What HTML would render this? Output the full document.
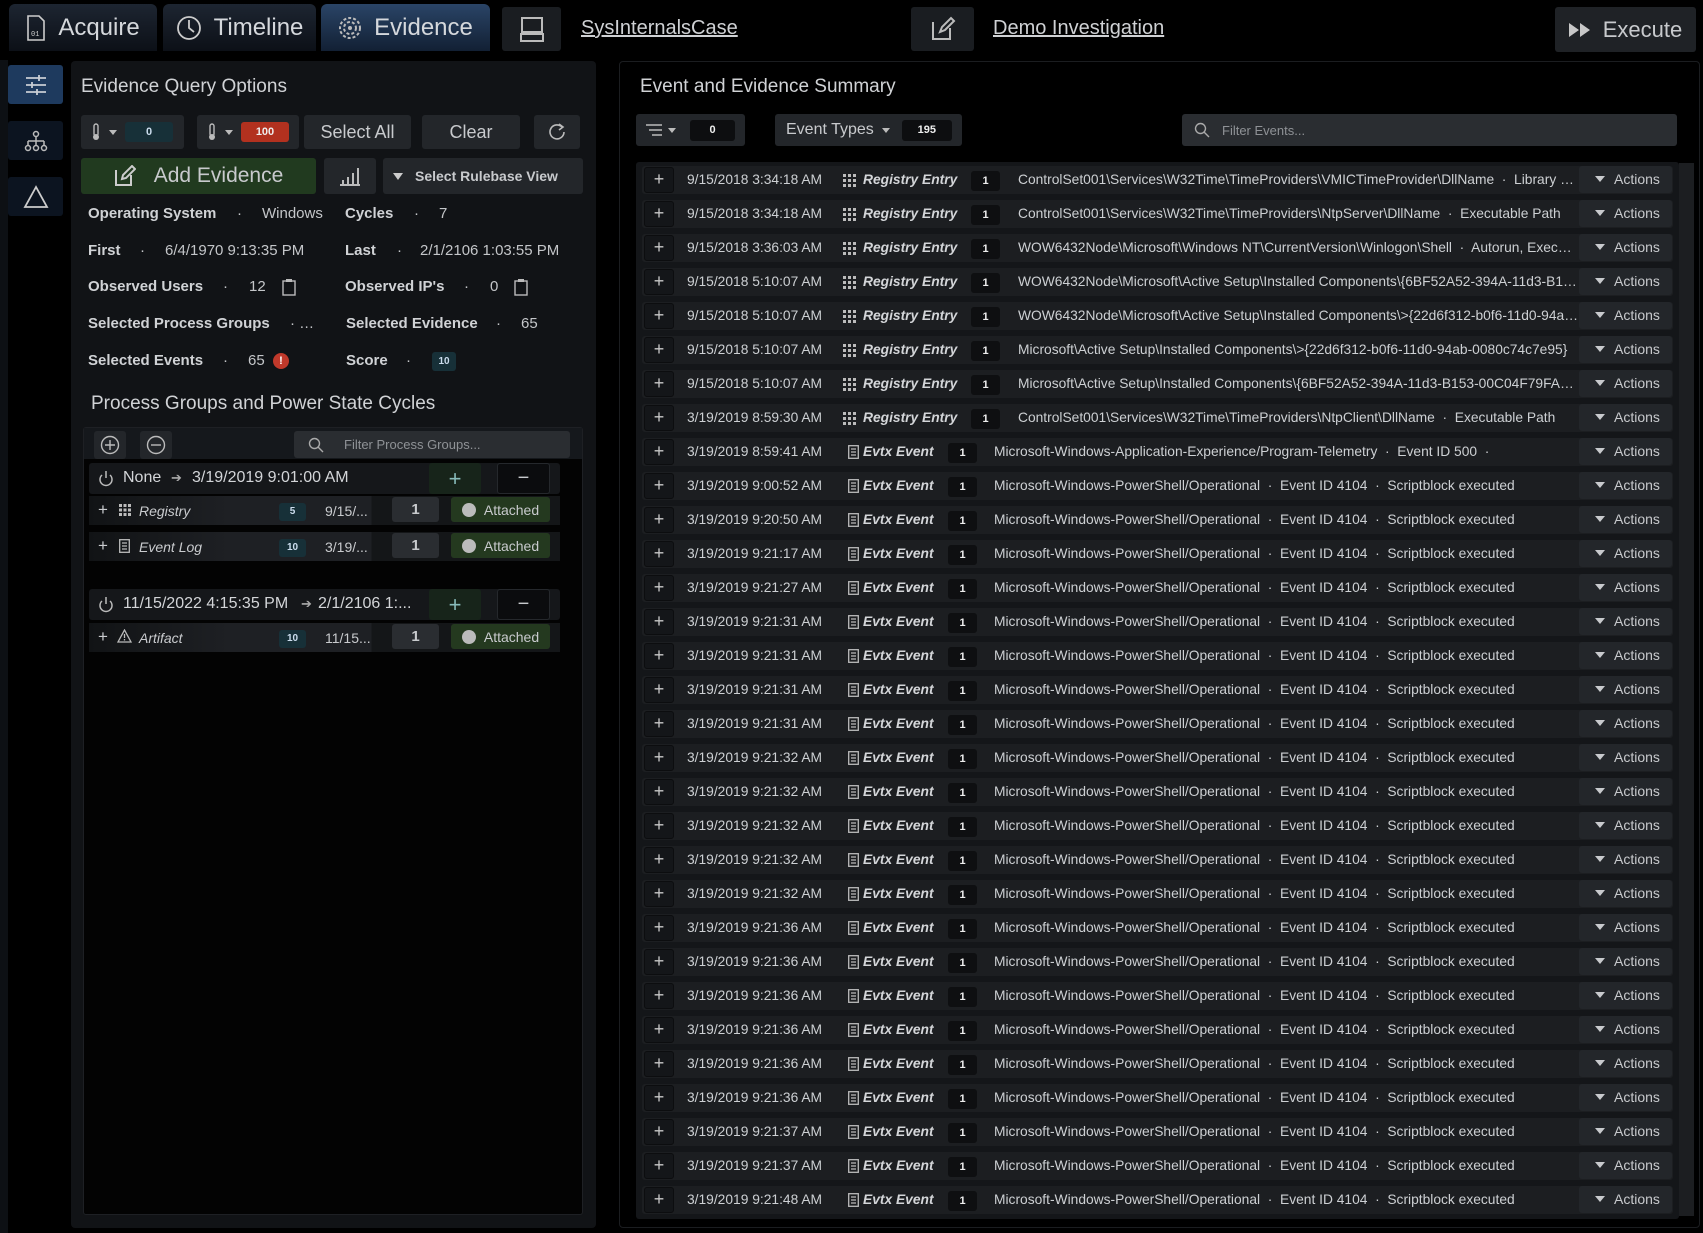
<!DOCTYPE html>
<html><head><meta charset="utf-8"><style>
*{box-sizing:border-box;margin:0;padding:0}
body{width:1703px;height:1233px;background:#000;overflow:hidden;position:relative;font-family:"Liberation Sans",sans-serif;color:#c9cbce}
.a{position:absolute}
.tab{position:absolute;top:4px;height:47px;background:linear-gradient(#1d2531,#0c1017);border-radius:6px 6px 0 0;color:#d5d8dc;font-size:24px;display:flex;align-items:center;gap:12px;justify-content:center}
.tab.on{background:linear-gradient(#2a4466,#122034)}
.btn{position:absolute;background:#23262a;border-radius:3px;color:#c8cacd;display:flex;align-items:center;justify-content:center}
.sb{position:absolute;left:8px;width:55px;height:39px;background:#0c1420;border-radius:3px;display:flex;align-items:center;justify-content:center}
.st{position:absolute;font-size:15px;color:#c4c6c9;white-space:nowrap}
.st b{color:#d0d2d5}
.row{position:absolute;left:642px;width:1031px;height:28px;background:#1c1e21;border-radius:3px;font-size:13.8px;white-space:nowrap}
.row>*{position:absolute}
.pl{left:2px;top:1px;width:30px;height:26px;background:#141619;border:1px solid #0c0d0f;border-radius:3px;color:#c8c8c8;font-size:18px;text-align:center;line-height:23px}
.dt{left:45px;top:6px;color:#cdd0d3}
.ty{top:6px;left:221px;font-weight:bold;font-style:italic;color:#d4d6d9}
.bd{top:5px;height:20px;width:29px;background:#0e0f11;border-radius:3px;color:#eee;font-size:11px;font-weight:bold;text-align:center;line-height:20px}
.tx{top:6px;width:560px;overflow:hidden;text-overflow:ellipsis;color:#cdd0d3}
.ac{left:937px;top:0;width:93px;height:27px;background:#23262a;border-radius:3px;color:#c8cacd;font-size:14px;line-height:27px;padding-left:16px}
.ac:before{content:"";display:inline-block;border-left:5px solid transparent;border-right:5px solid transparent;border-top:6px solid #c8cacd;margin-right:9px;vertical-align:2px}
.txt{position:absolute;white-space:nowrap}
</style></head><body>
<div class="tab" style="left:9px;width:148px"><svg width="20" height="26" viewBox="0 0 20 26"><path d="M2 1h11l5 5v19H2z" fill="none" stroke="#ccc" stroke-width="1.6"/><text x="5" y="21" font-size="7" fill="#ccc" font-family="Liberation Mono">01</text></svg>Acquire</div>
<div class="tab" style="left:163px;width:153px"><svg width="26" height="26"><circle cx="13" cy="13" r="11" fill="none" stroke="#ccc" stroke-width="1.8"/><path d="M13 5v8l5 4" fill="none" stroke="#ccc" stroke-width="1.8"/></svg>Timeline</div>
<div class="tab on" style="left:321px;width:169px"><svg width="24" height="24"><circle cx="12" cy="12" r="10" fill="none" stroke="#bbb" stroke-width="2" stroke-dasharray="3 2"/><circle cx="12" cy="12" r="6" fill="none" stroke="#bbb" stroke-width="2" stroke-dasharray="3 2"/><circle cx="12" cy="12" r="2" fill="#bbb"/></svg>Evidence</div>
<div class="btn" style="left:502px;top:7px;width:59px;height:44px;background:#1a1d21"><svg width="28" height="28"><rect x="4" y="3" width="20" height="14" fill="none" stroke="#bbb" stroke-width="2"/><rect x="3" y="19" width="22" height="7" fill="none" stroke="#bbb" stroke-width="2"/></svg></div>
<div class="txt" style="left:581px;top:17px;font-size:20px;text-decoration:underline;color:#cfd1d4">SysInternalsCase</div>
<div class="btn" style="left:911px;top:7px;width:63px;height:44px;background:#1a1d21"><svg width="26" height="26"><path d="M3 6v17h17V12" fill="none" stroke="#bbb" stroke-width="2"/><path d="M10 16l2-5 9-9 3 3-9 9z" fill="none" stroke="#bbb" stroke-width="2"/></svg></div>
<div class="txt" style="left:993px;top:17px;font-size:20px;text-decoration:underline;color:#cfd1d4">Demo Investigation</div>
<div class="btn" style="left:1555px;top:7px;width:141px;height:45px;background:#1f2226;font-size:22px;gap:12px"><svg width="22" height="14"><path d="M0 0l10 7-10 7zM11 0l10 7-10 7z" fill="#c8c8c8"/></svg>Execute</div>

<div class="a" style="left:0;top:60px;width:8px;height:1173px;background:#0d1014"></div>
<div class="sb" style="top:65px;background:#1e3a5e"><svg width="24" height="22"><path d="M2 4h20M2 11h20M2 18h20M15 1v6M8 8v6M13 15v6" stroke="#c8cdd4" stroke-width="1.8"/></svg></div>
<div class="sb" style="top:121px"><svg width="26" height="22"><circle cx="13" cy="4" r="2.5" fill="none" stroke="#bbb" stroke-width="1.5"/><path d="M13 7v4M5 11h16M5 11v4M13 11v4M21 11v4" stroke="#bbb" stroke-width="1.5" fill="none"/><circle cx="5" cy="18" r="2.5" fill="none" stroke="#bbb" stroke-width="1.5"/><circle cx="13" cy="18" r="2.5" fill="none" stroke="#bbb" stroke-width="1.5"/><circle cx="21" cy="18" r="2.5" fill="none" stroke="#bbb" stroke-width="1.5"/></svg></div>
<div class="sb" style="top:177px"><svg width="26" height="24"><path d="M13 2L2 22h22z" fill="none" stroke="#ccc" stroke-width="1.8"/></svg></div>

<div class="a" style="left:71px;top:61px;width:525px;height:1167px;background:#111316;border-radius:4px"></div>
<div class="txt" style="left:81px;top:76px;font-size:19px;color:#d0d2d5">Evidence Query Options</div>
<div class="btn" style="left:81px;top:115px;width:103px;height:34px;justify-content:flex-start;padding-left:10px;gap:8px"><svg width="10" height="18"><rect x="3" y="1" width="4" height="12" rx="2" fill="none" stroke="#bbb" stroke-width="1.4"/><circle cx="5" cy="14" r="3" fill="#bbb"/></svg><span style="border-left:4px solid transparent;border-right:4px solid transparent;border-top:5px solid #bbb"></span><span style="width:48px;height:20px;background:#173038;border-radius:3px;font-size:11px;font-weight:bold;text-align:center;line-height:20px;color:#cde">0</span></div>
<div class="btn" style="left:197px;top:115px;width:102px;height:34px;justify-content:flex-start;padding-left:10px;gap:8px"><svg width="10" height="18"><rect x="3" y="1" width="4" height="12" rx="2" fill="none" stroke="#bbb" stroke-width="1.4"/><circle cx="5" cy="14" r="3" fill="#bbb"/></svg><span style="border-left:4px solid transparent;border-right:4px solid transparent;border-top:5px solid #bbb"></span><span style="width:48px;height:20px;background:#b2311f;border-radius:3px;font-size:11px;font-weight:bold;text-align:center;line-height:20px;color:#eee">100</span></div>
<div class="btn" style="left:304px;top:115px;width:107px;height:34px;font-size:18px">Select All</div>
<div class="btn" style="left:422px;top:115px;width:98px;height:34px;font-size:18px">Clear</div>
<div class="btn" style="left:534px;top:115px;width:46px;height:34px"><svg width="18" height="18"><path d="M14 4A7 7 0 1 0 16 9" fill="none" stroke="#bbb" stroke-width="1.6"/><path d="M11 1l4 3-4 3" fill="none" stroke="#bbb" stroke-width="1.6"/></svg></div>
<div class="btn" style="left:81px;top:158px;width:235px;height:36px;background:#213a1f;font-size:21px;gap:18px"><svg width="22" height="22"><path d="M2 5v15h15V10" fill="none" stroke="#ccc" stroke-width="2"/><path d="M8 14l1-4 9-9 3 3-9 9z" fill="none" stroke="#ccc" stroke-width="2"/></svg>Add Evidence</div>
<div class="btn" style="left:324px;top:158px;width:52px;height:36px"><svg width="22" height="20"><path d="M1 19h20M4 18v-4M9 18v-7M14 18v-11M19 18v-16" stroke="#bbb" stroke-width="2"/></svg></div>
<div class="btn" style="left:383px;top:158px;width:200px;height:36px;font-size:14px;font-weight:bold;justify-content:flex-start;padding-left:10px;gap:12px"><span style="border-left:5px solid transparent;border-right:5px solid transparent;border-top:7px solid #ccc"></span>Select Rulebase View</div>

<div class="st" style="left:88px;top:205px"><b>Operating System</b></div><div class="st" style="left:237px;top:205px">·</div><div class="st" style="left:262px;top:205px">Windows</div>
<div class="st" style="left:345px;top:205px"><b>Cycles</b></div><div class="st" style="left:414px;top:205px">·</div><div class="st" style="left:439px;top:205px">7</div>
<div class="st" style="left:88px;top:242px"><b>First</b></div><div class="st" style="left:140px;top:242px">·</div><div class="st" style="left:165px;top:242px">6/4/1970 9:13:35 PM</div>
<div class="st" style="left:345px;top:242px"><b>Last</b></div><div class="st" style="left:397px;top:242px">·</div><div class="st" style="left:420px;top:242px">2/1/2106 1:03:55 PM</div>
<div class="st" style="left:88px;top:278px"><b>Observed Users</b></div><div class="st" style="left:223px;top:278px">·</div><div class="st" style="left:249px;top:278px">12</div>
<svg class="a" style="left:282px;top:279px" width="14" height="17"><rect x="1" y="2" width="12" height="14" fill="none" stroke="#bbb" stroke-width="1.4"/><rect x="4" y="0" width="6" height="3" fill="#bbb"/></svg>
<div class="st" style="left:345px;top:278px"><b>Observed IP's</b></div><div class="st" style="left:464px;top:278px">·</div><div class="st" style="left:490px;top:278px">0</div>
<svg class="a" style="left:514px;top:279px" width="14" height="17"><rect x="1" y="2" width="12" height="14" fill="none" stroke="#bbb" stroke-width="1.4"/><rect x="4" y="0" width="6" height="3" fill="#bbb"/></svg>
<div class="st" style="left:88px;top:315px"><b>Selected Process Groups</b></div><div class="st" style="left:290px;top:315px">· …</div>
<div class="st" style="left:346px;top:315px"><b>Selected Evidence</b></div><div class="st" style="left:496px;top:315px">·</div><div class="st" style="left:521px;top:315px">65</div>
<div class="st" style="left:88px;top:352px"><b>Selected Events</b></div><div class="st" style="left:223px;top:352px">·</div><div class="st" style="left:248px;top:352px">65</div>
<div class="a" style="left:273px;top:353px;width:16px;height:16px;border-radius:50%;background:#c0392b;color:#fff;font-size:11px;font-weight:bold;text-align:center;line-height:16px">!</div>
<div class="st" style="left:346px;top:352px"><b>Score</b></div><div class="st" style="left:406px;top:352px">·</div>
<div class="a" style="left:432px;top:352px;width:24px;height:19px;background:#173038;border-radius:3px;color:#cde;font-size:10px;font-weight:bold;text-align:center;line-height:19px">10</div>

<div class="txt" style="left:91px;top:393px;font-size:19px;color:#d0d2d5">Process Groups and Power State Cycles</div>
<div class="a" style="left:83px;top:427px;width:500px;height:788px;background:#030303;border:1px solid #1e2024;border-radius:3px"></div>
<div class="a" style="left:84px;top:428px;width:498px;height:31px;background:#15181c"></div>
<div class="btn" style="left:94px;top:431px;width:32px;height:28px"><svg width="20" height="20"><circle cx="10" cy="10" r="8.5" fill="none" stroke="#bbb" stroke-width="1.4"/><path d="M10 5v10M5 10h10" stroke="#bbb" stroke-width="1.4"/></svg></div>
<div class="btn" style="left:140px;top:431px;width:32px;height:28px"><svg width="20" height="20"><circle cx="10" cy="10" r="8.5" fill="none" stroke="#bbb" stroke-width="1.4"/><path d="M5 10h10" stroke="#bbb" stroke-width="1.4"/></svg></div>
<div class="btn" style="left:294px;top:431px;width:276px;height:27px;background:#2a2d31;justify-content:flex-start;padding-left:14px;gap:20px;font-size:13px;color:#8f9296"><svg width="16" height="16"><circle cx="6.5" cy="6.5" r="5" fill="none" stroke="#aaa" stroke-width="1.4"/><path d="M10 10l5 5" stroke="#aaa" stroke-width="1.4"/></svg>Filter Process Groups...</div>

<div class="a" style="left:89px;top:463px;width:471px;height:31px;background:#15171a;border-radius:3px"></div>
<svg class="a" style="left:98px;top:470px" width="16" height="17"><path d="M4 5a6 6 0 1 0 8 0" fill="none" stroke="#bbb" stroke-width="1.5"/><path d="M8 1v7" stroke="#bbb" stroke-width="1.5"/></svg>
<div class="txt" style="left:123px;top:469px;font-size:16px;color:#d3d5d8">None</div><div class="txt" style="left:171px;top:470px;font-size:13px;color:#aaa">➔</div><div class="txt" style="left:192px;top:469px;font-size:16px;color:#d3d5d8">3/19/2019 9:01:00 AM</div>
<div class="btn" style="left:429px;top:463px;width:52px;height:31px;background:#17241a;font-size:22px;color:#8bb">+</div>
<div class="btn" style="left:497px;top:463px;width:53px;height:31px;background:#0b0c0e;border:1px solid #25282c;font-size:20px">−</div>
<div class="a" style="left:89px;top:496px;width:471px;height:29px;background:linear-gradient(90deg,#111315,#1e2024 30%,#1e2024 60%,#141618 60%)"></div>
<div class="txt" style="left:98px;top:500px;font-size:17px">+</div>
<svg class="a" style="left:119px;top:504px" width="12" height="12"><path d="M0 0h3v3H0zM4.5 0h3v3h-3zM9 0h3v3H9zM0 4.5h3v3H0zM4.5 4.5h3v3h-3zM9 4.5h3v3H9zM0 9h3v3H0zM4.5 9h3v3h-3zM9 9h3v3H9z" fill="#bbb"/></svg>
<div class="txt" style="left:139px;top:503px;font-size:14px;font-style:italic">Registry</div>
<div class="a" style="left:279px;top:503px;width:27px;height:18px;background:#173038;border-radius:3px;color:#cde;font-size:10px;font-weight:bold;text-align:center;line-height:18px">5</div>
<div class="txt" style="left:325px;top:503px;font-size:14px">9/15/...</div>
<div class="btn" style="left:392px;top:497px;width:47px;height:25px;background:#2a2d31;font-size:15px;font-weight:bold">1</div>
<div class="btn" style="left:451px;top:497px;width:99px;height:25px;background:#24391f;font-size:14px;gap:8px"><span style="width:14px;height:14px;border-radius:50%;background:#bbb"></span>Attached</div>

<div class="a" style="left:89px;top:532px;width:471px;height:29px;background:linear-gradient(90deg,#111315,#1e2024 30%,#1e2024 60%,#141618 60%)"></div>
<div class="txt" style="left:98px;top:536px;font-size:17px">+</div>
<svg class="a" style="left:119px;top:539px" width="11" height="14"><rect x="0.7" y="0.7" width="9.6" height="12.6" fill="none" stroke="#bbb" stroke-width="1.3"/><path d="M3 4h5M3 7h5M3 10h5" stroke="#bbb" stroke-width="1.2"/></svg>
<div class="txt" style="left:139px;top:539px;font-size:14px;font-style:italic">Event Log</div>
<div class="a" style="left:279px;top:539px;width:27px;height:18px;background:#173038;border-radius:3px;color:#cde;font-size:10px;font-weight:bold;text-align:center;line-height:18px">10</div>
<div class="txt" style="left:325px;top:539px;font-size:14px">3/19/...</div>
<div class="btn" style="left:392px;top:533px;width:47px;height:25px;background:#2a2d31;font-size:15px;font-weight:bold">1</div>
<div class="btn" style="left:451px;top:533px;width:99px;height:25px;background:#24391f;font-size:14px;gap:8px"><span style="width:14px;height:14px;border-radius:50%;background:#bbb"></span>Attached</div>

<div class="a" style="left:89px;top:589px;width:471px;height:31px;background:#15171a;border-radius:3px"></div>
<svg class="a" style="left:98px;top:596px" width="16" height="17"><path d="M4 5a6 6 0 1 0 8 0" fill="none" stroke="#bbb" stroke-width="1.5"/><path d="M8 1v7" stroke="#bbb" stroke-width="1.5"/></svg>
<div class="txt" style="left:123px;top:595px;font-size:16px;color:#d3d5d8">11/15/2022 4:15:35 PM</div><div class="txt" style="left:301px;top:596px;font-size:13px;color:#aaa">➔</div><div class="txt" style="left:318px;top:595px;font-size:16px;color:#d3d5d8">2/1/2106 1:...</div>
<div class="btn" style="left:429px;top:589px;width:52px;height:31px;background:#17241a;font-size:22px;color:#8bb">+</div>
<div class="btn" style="left:497px;top:589px;width:53px;height:31px;background:#0b0c0e;border:1px solid #25282c;font-size:20px">−</div>
<div class="a" style="left:89px;top:623px;width:471px;height:29px;background:linear-gradient(90deg,#111315,#1e2024 30%,#1e2024 60%,#141618 60%)"></div>
<div class="txt" style="left:98px;top:627px;font-size:17px">+</div>
<svg class="a" style="left:117px;top:629px" width="15" height="14"><path d="M7.5 1L1 13h13z" fill="none" stroke="#bbb" stroke-width="1.3"/><path d="M7.5 5v4M7.5 10v1.5" stroke="#bbb" stroke-width="1.3"/></svg>
<div class="txt" style="left:139px;top:630px;font-size:14px;font-style:italic">Artifact</div>
<div class="a" style="left:279px;top:630px;width:27px;height:18px;background:#173038;border-radius:3px;color:#cde;font-size:10px;font-weight:bold;text-align:center;line-height:18px">10</div>
<div class="txt" style="left:325px;top:630px;font-size:14px">11/15...</div>
<div class="btn" style="left:392px;top:624px;width:47px;height:25px;background:#2a2d31;font-size:15px;font-weight:bold">1</div>
<div class="btn" style="left:451px;top:624px;width:99px;height:25px;background:#24391f;font-size:14px;gap:8px"><span style="width:14px;height:14px;border-radius:50%;background:#bbb"></span>Attached</div>

<div class="a" style="left:619px;top:61px;width:1081px;height:1167px;background:#000;border:1px solid #1b1d20;border-radius:4px"></div>
<div class="txt" style="left:640px;top:76px;font-size:19px;color:#d0d2d5">Event and Evidence Summary</div>
<div class="btn" style="left:636px;top:114px;width:109px;height:32px;justify-content:flex-start;padding-left:10px;gap:6px"><svg width="16" height="12"><path d="M0 1h16M3 6h13M6 11h10" stroke="#bbb" stroke-width="1.4"/></svg><span style="border-left:4px solid transparent;border-right:4px solid transparent;border-top:5px solid #bbb"></span><span style="margin-left:8px;width:45px;height:21px;background:#0d0e10;border-radius:3px;font-size:11px;font-weight:bold;text-align:center;line-height:21px;color:#eee">0</span></div>
<div class="btn" style="left:775px;top:114px;width:187px;height:32px;justify-content:flex-start;padding-left:11px;gap:8px;font-size:16px">Event Types<span style="border-left:4px solid transparent;border-right:4px solid transparent;border-top:5px solid #bbb"></span><span style="margin-left:4px;width:50px;height:21px;background:#0d0e10;border-radius:3px;font-size:11px;font-weight:bold;text-align:center;line-height:21px;color:#eee">195</span></div>
<div class="btn" style="left:1182px;top:114px;width:495px;height:32px;background:#2a2d31;justify-content:flex-start;padding-left:12px;gap:12px;font-size:13px;color:#8f9296"><svg width="16" height="16"><circle cx="6.5" cy="6.5" r="5" fill="none" stroke="#aaa" stroke-width="1.4"/><path d="M10 10l5 5" stroke="#aaa" stroke-width="1.4"/></svg>Filter Events...</div>
<div class="a" style="left:636px;top:162px;width:1043px;height:1057px;background:#141619;border-radius:3px"></div>
<div class="a" style="left:1679px;top:163px;width:15px;height:1053px;background:#1c1e21"></div>

<div class="row" style="top:166px"><div class="pl">+</div><div class="dt">9/15/2018 3:34:18 AM</div><svg style="left:201px;top:8px" width="13" height="13"><path d="M0 0h3v3H0zM5 0h3v3H5zM10 0h3v3h-3zM0 5h3v3H0zM5 5h3v3H5zM10 5h3v3h-3zM0 10h3v3H0zM5 10h3v3H5zM10 10h3v3h-3z" fill="#bbb"/></svg><div class="ty">Registry Entry</div><div class="bd" style="left:329px">1</div><div class="tx" style="left:376px">ControlSet001\Services\W32Time\TimeProviders\VMICTimeProvider\DllName &nbsp;·&nbsp; Library Path</div><div class="ac">Actions</div></div>
<div class="row" style="top:200px"><div class="pl">+</div><div class="dt">9/15/2018 3:34:18 AM</div><svg style="left:201px;top:8px" width="13" height="13"><path d="M0 0h3v3H0zM5 0h3v3H5zM10 0h3v3h-3zM0 5h3v3H0zM5 5h3v3H5zM10 5h3v3h-3zM0 10h3v3H0zM5 10h3v3H5zM10 10h3v3h-3z" fill="#bbb"/></svg><div class="ty">Registry Entry</div><div class="bd" style="left:329px">1</div><div class="tx" style="left:376px">ControlSet001\Services\W32Time\TimeProviders\NtpServer\DllName &nbsp;·&nbsp; Executable Path</div><div class="ac">Actions</div></div>
<div class="row" style="top:234px"><div class="pl">+</div><div class="dt">9/15/2018 3:36:03 AM</div><svg style="left:201px;top:8px" width="13" height="13"><path d="M0 0h3v3H0zM5 0h3v3H5zM10 0h3v3h-3zM0 5h3v3H0zM5 5h3v3H5zM10 5h3v3h-3zM0 10h3v3H0zM5 10h3v3H5zM10 10h3v3h-3z" fill="#bbb"/></svg><div class="ty">Registry Entry</div><div class="bd" style="left:329px">1</div><div class="tx" style="left:376px">WOW6432Node\Microsoft\Windows NT\CurrentVersion\Winlogon\Shell &nbsp;·&nbsp; Autorun, Executable</div><div class="ac">Actions</div></div>
<div class="row" style="top:268px"><div class="pl">+</div><div class="dt">9/15/2018 5:10:07 AM</div><svg style="left:201px;top:8px" width="13" height="13"><path d="M0 0h3v3H0zM5 0h3v3H5zM10 0h3v3h-3zM0 5h3v3H0zM5 5h3v3H5zM10 5h3v3h-3zM0 10h3v3H0zM5 10h3v3H5zM10 10h3v3h-3z" fill="#bbb"/></svg><div class="ty">Registry Entry</div><div class="bd" style="left:329px">1</div><div class="tx" style="left:376px">WOW6432Node\Microsoft\Active Setup\Installed Components\{6BF52A52-394A-11d3-B153-00C04F79FAA6}</div><div class="ac">Actions</div></div>
<div class="row" style="top:302px"><div class="pl">+</div><div class="dt">9/15/2018 5:10:07 AM</div><svg style="left:201px;top:8px" width="13" height="13"><path d="M0 0h3v3H0zM5 0h3v3H5zM10 0h3v3h-3zM0 5h3v3H0zM5 5h3v3H5zM10 5h3v3h-3zM0 10h3v3H0zM5 10h3v3H5zM10 10h3v3h-3z" fill="#bbb"/></svg><div class="ty">Registry Entry</div><div class="bd" style="left:329px">1</div><div class="tx" style="left:376px">WOW6432Node\Microsoft\Active Setup\Installed Components\&gt;{22d6f312-b0f6-11d0-94ab-0080c74c7e95}</div><div class="ac">Actions</div></div>
<div class="row" style="top:336px"><div class="pl">+</div><div class="dt">9/15/2018 5:10:07 AM</div><svg style="left:201px;top:8px" width="13" height="13"><path d="M0 0h3v3H0zM5 0h3v3H5zM10 0h3v3h-3zM0 5h3v3H0zM5 5h3v3H5zM10 5h3v3h-3zM0 10h3v3H0zM5 10h3v3H5zM10 10h3v3h-3z" fill="#bbb"/></svg><div class="ty">Registry Entry</div><div class="bd" style="left:329px">1</div><div class="tx" style="left:376px">Microsoft\Active Setup\Installed Components\&gt;{22d6f312-b0f6-11d0-94ab-0080c74c7e95}</div><div class="ac">Actions</div></div>
<div class="row" style="top:370px"><div class="pl">+</div><div class="dt">9/15/2018 5:10:07 AM</div><svg style="left:201px;top:8px" width="13" height="13"><path d="M0 0h3v3H0zM5 0h3v3H5zM10 0h3v3h-3zM0 5h3v3H0zM5 5h3v3H5zM10 5h3v3h-3zM0 10h3v3H0zM5 10h3v3H5zM10 10h3v3h-3z" fill="#bbb"/></svg><div class="ty">Registry Entry</div><div class="bd" style="left:329px">1</div><div class="tx" style="left:376px">Microsoft\Active Setup\Installed Components\{6BF52A52-394A-11d3-B153-00C04F79FAA6}</div><div class="ac">Actions</div></div>
<div class="row" style="top:404px"><div class="pl">+</div><div class="dt">3/19/2019 8:59:30 AM</div><svg style="left:201px;top:8px" width="13" height="13"><path d="M0 0h3v3H0zM5 0h3v3H5zM10 0h3v3h-3zM0 5h3v3H0zM5 5h3v3H5zM10 5h3v3h-3zM0 10h3v3H0zM5 10h3v3H5zM10 10h3v3h-3z" fill="#bbb"/></svg><div class="ty">Registry Entry</div><div class="bd" style="left:329px">1</div><div class="tx" style="left:376px">ControlSet001\Services\W32Time\TimeProviders\NtpClient\DllName &nbsp;·&nbsp; Executable Path</div><div class="ac">Actions</div></div>
<div class="row" style="top:438px"><div class="pl">+</div><div class="dt">3/19/2019 8:59:41 AM</div><svg style="left:206px;top:7px" width="11" height="14"><rect x="0.7" y="0.7" width="9.6" height="12.6" fill="none" stroke="#bbb" stroke-width="1.3"/><path d="M3 4h5M3 7h5M3 10h5" stroke="#bbb" stroke-width="1.2"/></svg><div class="ty">Evtx Event</div><div class="bd" style="left:306px">1</div><div class="tx" style="left:352px">Microsoft-Windows-Application-Experience/Program-Telemetry &nbsp;·&nbsp; Event ID 500 &nbsp;·</div><div class="ac">Actions</div></div>
<div class="row" style="top:472px"><div class="pl">+</div><div class="dt">3/19/2019 9:00:52 AM</div><svg style="left:206px;top:7px" width="11" height="14"><rect x="0.7" y="0.7" width="9.6" height="12.6" fill="none" stroke="#bbb" stroke-width="1.3"/><path d="M3 4h5M3 7h5M3 10h5" stroke="#bbb" stroke-width="1.2"/></svg><div class="ty">Evtx Event</div><div class="bd" style="left:306px">1</div><div class="tx" style="left:352px">Microsoft-Windows-PowerShell/Operational &nbsp;·&nbsp; Event ID 4104 &nbsp;·&nbsp; Scriptblock executed</div><div class="ac">Actions</div></div>
<div class="row" style="top:506px"><div class="pl">+</div><div class="dt">3/19/2019 9:20:50 AM</div><svg style="left:206px;top:7px" width="11" height="14"><rect x="0.7" y="0.7" width="9.6" height="12.6" fill="none" stroke="#bbb" stroke-width="1.3"/><path d="M3 4h5M3 7h5M3 10h5" stroke="#bbb" stroke-width="1.2"/></svg><div class="ty">Evtx Event</div><div class="bd" style="left:306px">1</div><div class="tx" style="left:352px">Microsoft-Windows-PowerShell/Operational &nbsp;·&nbsp; Event ID 4104 &nbsp;·&nbsp; Scriptblock executed</div><div class="ac">Actions</div></div>
<div class="row" style="top:540px"><div class="pl">+</div><div class="dt">3/19/2019 9:21:17 AM</div><svg style="left:206px;top:7px" width="11" height="14"><rect x="0.7" y="0.7" width="9.6" height="12.6" fill="none" stroke="#bbb" stroke-width="1.3"/><path d="M3 4h5M3 7h5M3 10h5" stroke="#bbb" stroke-width="1.2"/></svg><div class="ty">Evtx Event</div><div class="bd" style="left:306px">1</div><div class="tx" style="left:352px">Microsoft-Windows-PowerShell/Operational &nbsp;·&nbsp; Event ID 4104 &nbsp;·&nbsp; Scriptblock executed</div><div class="ac">Actions</div></div>
<div class="row" style="top:574px"><div class="pl">+</div><div class="dt">3/19/2019 9:21:27 AM</div><svg style="left:206px;top:7px" width="11" height="14"><rect x="0.7" y="0.7" width="9.6" height="12.6" fill="none" stroke="#bbb" stroke-width="1.3"/><path d="M3 4h5M3 7h5M3 10h5" stroke="#bbb" stroke-width="1.2"/></svg><div class="ty">Evtx Event</div><div class="bd" style="left:306px">1</div><div class="tx" style="left:352px">Microsoft-Windows-PowerShell/Operational &nbsp;·&nbsp; Event ID 4104 &nbsp;·&nbsp; Scriptblock executed</div><div class="ac">Actions</div></div>
<div class="row" style="top:608px"><div class="pl">+</div><div class="dt">3/19/2019 9:21:31 AM</div><svg style="left:206px;top:7px" width="11" height="14"><rect x="0.7" y="0.7" width="9.6" height="12.6" fill="none" stroke="#bbb" stroke-width="1.3"/><path d="M3 4h5M3 7h5M3 10h5" stroke="#bbb" stroke-width="1.2"/></svg><div class="ty">Evtx Event</div><div class="bd" style="left:306px">1</div><div class="tx" style="left:352px">Microsoft-Windows-PowerShell/Operational &nbsp;·&nbsp; Event ID 4104 &nbsp;·&nbsp; Scriptblock executed</div><div class="ac">Actions</div></div>
<div class="row" style="top:642px"><div class="pl">+</div><div class="dt">3/19/2019 9:21:31 AM</div><svg style="left:206px;top:7px" width="11" height="14"><rect x="0.7" y="0.7" width="9.6" height="12.6" fill="none" stroke="#bbb" stroke-width="1.3"/><path d="M3 4h5M3 7h5M3 10h5" stroke="#bbb" stroke-width="1.2"/></svg><div class="ty">Evtx Event</div><div class="bd" style="left:306px">1</div><div class="tx" style="left:352px">Microsoft-Windows-PowerShell/Operational &nbsp;·&nbsp; Event ID 4104 &nbsp;·&nbsp; Scriptblock executed</div><div class="ac">Actions</div></div>
<div class="row" style="top:676px"><div class="pl">+</div><div class="dt">3/19/2019 9:21:31 AM</div><svg style="left:206px;top:7px" width="11" height="14"><rect x="0.7" y="0.7" width="9.6" height="12.6" fill="none" stroke="#bbb" stroke-width="1.3"/><path d="M3 4h5M3 7h5M3 10h5" stroke="#bbb" stroke-width="1.2"/></svg><div class="ty">Evtx Event</div><div class="bd" style="left:306px">1</div><div class="tx" style="left:352px">Microsoft-Windows-PowerShell/Operational &nbsp;·&nbsp; Event ID 4104 &nbsp;·&nbsp; Scriptblock executed</div><div class="ac">Actions</div></div>
<div class="row" style="top:710px"><div class="pl">+</div><div class="dt">3/19/2019 9:21:31 AM</div><svg style="left:206px;top:7px" width="11" height="14"><rect x="0.7" y="0.7" width="9.6" height="12.6" fill="none" stroke="#bbb" stroke-width="1.3"/><path d="M3 4h5M3 7h5M3 10h5" stroke="#bbb" stroke-width="1.2"/></svg><div class="ty">Evtx Event</div><div class="bd" style="left:306px">1</div><div class="tx" style="left:352px">Microsoft-Windows-PowerShell/Operational &nbsp;·&nbsp; Event ID 4104 &nbsp;·&nbsp; Scriptblock executed</div><div class="ac">Actions</div></div>
<div class="row" style="top:744px"><div class="pl">+</div><div class="dt">3/19/2019 9:21:32 AM</div><svg style="left:206px;top:7px" width="11" height="14"><rect x="0.7" y="0.7" width="9.6" height="12.6" fill="none" stroke="#bbb" stroke-width="1.3"/><path d="M3 4h5M3 7h5M3 10h5" stroke="#bbb" stroke-width="1.2"/></svg><div class="ty">Evtx Event</div><div class="bd" style="left:306px">1</div><div class="tx" style="left:352px">Microsoft-Windows-PowerShell/Operational &nbsp;·&nbsp; Event ID 4104 &nbsp;·&nbsp; Scriptblock executed</div><div class="ac">Actions</div></div>
<div class="row" style="top:778px"><div class="pl">+</div><div class="dt">3/19/2019 9:21:32 AM</div><svg style="left:206px;top:7px" width="11" height="14"><rect x="0.7" y="0.7" width="9.6" height="12.6" fill="none" stroke="#bbb" stroke-width="1.3"/><path d="M3 4h5M3 7h5M3 10h5" stroke="#bbb" stroke-width="1.2"/></svg><div class="ty">Evtx Event</div><div class="bd" style="left:306px">1</div><div class="tx" style="left:352px">Microsoft-Windows-PowerShell/Operational &nbsp;·&nbsp; Event ID 4104 &nbsp;·&nbsp; Scriptblock executed</div><div class="ac">Actions</div></div>
<div class="row" style="top:812px"><div class="pl">+</div><div class="dt">3/19/2019 9:21:32 AM</div><svg style="left:206px;top:7px" width="11" height="14"><rect x="0.7" y="0.7" width="9.6" height="12.6" fill="none" stroke="#bbb" stroke-width="1.3"/><path d="M3 4h5M3 7h5M3 10h5" stroke="#bbb" stroke-width="1.2"/></svg><div class="ty">Evtx Event</div><div class="bd" style="left:306px">1</div><div class="tx" style="left:352px">Microsoft-Windows-PowerShell/Operational &nbsp;·&nbsp; Event ID 4104 &nbsp;·&nbsp; Scriptblock executed</div><div class="ac">Actions</div></div>
<div class="row" style="top:846px"><div class="pl">+</div><div class="dt">3/19/2019 9:21:32 AM</div><svg style="left:206px;top:7px" width="11" height="14"><rect x="0.7" y="0.7" width="9.6" height="12.6" fill="none" stroke="#bbb" stroke-width="1.3"/><path d="M3 4h5M3 7h5M3 10h5" stroke="#bbb" stroke-width="1.2"/></svg><div class="ty">Evtx Event</div><div class="bd" style="left:306px">1</div><div class="tx" style="left:352px">Microsoft-Windows-PowerShell/Operational &nbsp;·&nbsp; Event ID 4104 &nbsp;·&nbsp; Scriptblock executed</div><div class="ac">Actions</div></div>
<div class="row" style="top:880px"><div class="pl">+</div><div class="dt">3/19/2019 9:21:32 AM</div><svg style="left:206px;top:7px" width="11" height="14"><rect x="0.7" y="0.7" width="9.6" height="12.6" fill="none" stroke="#bbb" stroke-width="1.3"/><path d="M3 4h5M3 7h5M3 10h5" stroke="#bbb" stroke-width="1.2"/></svg><div class="ty">Evtx Event</div><div class="bd" style="left:306px">1</div><div class="tx" style="left:352px">Microsoft-Windows-PowerShell/Operational &nbsp;·&nbsp; Event ID 4104 &nbsp;·&nbsp; Scriptblock executed</div><div class="ac">Actions</div></div>
<div class="row" style="top:914px"><div class="pl">+</div><div class="dt">3/19/2019 9:21:36 AM</div><svg style="left:206px;top:7px" width="11" height="14"><rect x="0.7" y="0.7" width="9.6" height="12.6" fill="none" stroke="#bbb" stroke-width="1.3"/><path d="M3 4h5M3 7h5M3 10h5" stroke="#bbb" stroke-width="1.2"/></svg><div class="ty">Evtx Event</div><div class="bd" style="left:306px">1</div><div class="tx" style="left:352px">Microsoft-Windows-PowerShell/Operational &nbsp;·&nbsp; Event ID 4104 &nbsp;·&nbsp; Scriptblock executed</div><div class="ac">Actions</div></div>
<div class="row" style="top:948px"><div class="pl">+</div><div class="dt">3/19/2019 9:21:36 AM</div><svg style="left:206px;top:7px" width="11" height="14"><rect x="0.7" y="0.7" width="9.6" height="12.6" fill="none" stroke="#bbb" stroke-width="1.3"/><path d="M3 4h5M3 7h5M3 10h5" stroke="#bbb" stroke-width="1.2"/></svg><div class="ty">Evtx Event</div><div class="bd" style="left:306px">1</div><div class="tx" style="left:352px">Microsoft-Windows-PowerShell/Operational &nbsp;·&nbsp; Event ID 4104 &nbsp;·&nbsp; Scriptblock executed</div><div class="ac">Actions</div></div>
<div class="row" style="top:982px"><div class="pl">+</div><div class="dt">3/19/2019 9:21:36 AM</div><svg style="left:206px;top:7px" width="11" height="14"><rect x="0.7" y="0.7" width="9.6" height="12.6" fill="none" stroke="#bbb" stroke-width="1.3"/><path d="M3 4h5M3 7h5M3 10h5" stroke="#bbb" stroke-width="1.2"/></svg><div class="ty">Evtx Event</div><div class="bd" style="left:306px">1</div><div class="tx" style="left:352px">Microsoft-Windows-PowerShell/Operational &nbsp;·&nbsp; Event ID 4104 &nbsp;·&nbsp; Scriptblock executed</div><div class="ac">Actions</div></div>
<div class="row" style="top:1016px"><div class="pl">+</div><div class="dt">3/19/2019 9:21:36 AM</div><svg style="left:206px;top:7px" width="11" height="14"><rect x="0.7" y="0.7" width="9.6" height="12.6" fill="none" stroke="#bbb" stroke-width="1.3"/><path d="M3 4h5M3 7h5M3 10h5" stroke="#bbb" stroke-width="1.2"/></svg><div class="ty">Evtx Event</div><div class="bd" style="left:306px">1</div><div class="tx" style="left:352px">Microsoft-Windows-PowerShell/Operational &nbsp;·&nbsp; Event ID 4104 &nbsp;·&nbsp; Scriptblock executed</div><div class="ac">Actions</div></div>
<div class="row" style="top:1050px"><div class="pl">+</div><div class="dt">3/19/2019 9:21:36 AM</div><svg style="left:206px;top:7px" width="11" height="14"><rect x="0.7" y="0.7" width="9.6" height="12.6" fill="none" stroke="#bbb" stroke-width="1.3"/><path d="M3 4h5M3 7h5M3 10h5" stroke="#bbb" stroke-width="1.2"/></svg><div class="ty">Evtx Event</div><div class="bd" style="left:306px">1</div><div class="tx" style="left:352px">Microsoft-Windows-PowerShell/Operational &nbsp;·&nbsp; Event ID 4104 &nbsp;·&nbsp; Scriptblock executed</div><div class="ac">Actions</div></div>
<div class="row" style="top:1084px"><div class="pl">+</div><div class="dt">3/19/2019 9:21:36 AM</div><svg style="left:206px;top:7px" width="11" height="14"><rect x="0.7" y="0.7" width="9.6" height="12.6" fill="none" stroke="#bbb" stroke-width="1.3"/><path d="M3 4h5M3 7h5M3 10h5" stroke="#bbb" stroke-width="1.2"/></svg><div class="ty">Evtx Event</div><div class="bd" style="left:306px">1</div><div class="tx" style="left:352px">Microsoft-Windows-PowerShell/Operational &nbsp;·&nbsp; Event ID 4104 &nbsp;·&nbsp; Scriptblock executed</div><div class="ac">Actions</div></div>
<div class="row" style="top:1118px"><div class="pl">+</div><div class="dt">3/19/2019 9:21:37 AM</div><svg style="left:206px;top:7px" width="11" height="14"><rect x="0.7" y="0.7" width="9.6" height="12.6" fill="none" stroke="#bbb" stroke-width="1.3"/><path d="M3 4h5M3 7h5M3 10h5" stroke="#bbb" stroke-width="1.2"/></svg><div class="ty">Evtx Event</div><div class="bd" style="left:306px">1</div><div class="tx" style="left:352px">Microsoft-Windows-PowerShell/Operational &nbsp;·&nbsp; Event ID 4104 &nbsp;·&nbsp; Scriptblock executed</div><div class="ac">Actions</div></div>
<div class="row" style="top:1152px"><div class="pl">+</div><div class="dt">3/19/2019 9:21:37 AM</div><svg style="left:206px;top:7px" width="11" height="14"><rect x="0.7" y="0.7" width="9.6" height="12.6" fill="none" stroke="#bbb" stroke-width="1.3"/><path d="M3 4h5M3 7h5M3 10h5" stroke="#bbb" stroke-width="1.2"/></svg><div class="ty">Evtx Event</div><div class="bd" style="left:306px">1</div><div class="tx" style="left:352px">Microsoft-Windows-PowerShell/Operational &nbsp;·&nbsp; Event ID 4104 &nbsp;·&nbsp; Scriptblock executed</div><div class="ac">Actions</div></div>
<div class="row" style="top:1186px"><div class="pl">+</div><div class="dt">3/19/2019 9:21:48 AM</div><svg style="left:206px;top:7px" width="11" height="14"><rect x="0.7" y="0.7" width="9.6" height="12.6" fill="none" stroke="#bbb" stroke-width="1.3"/><path d="M3 4h5M3 7h5M3 10h5" stroke="#bbb" stroke-width="1.2"/></svg><div class="ty">Evtx Event</div><div class="bd" style="left:306px">1</div><div class="tx" style="left:352px">Microsoft-Windows-PowerShell/Operational &nbsp;·&nbsp; Event ID 4104 &nbsp;·&nbsp; Scriptblock executed</div><div class="ac">Actions</div></div>
</body></html>
